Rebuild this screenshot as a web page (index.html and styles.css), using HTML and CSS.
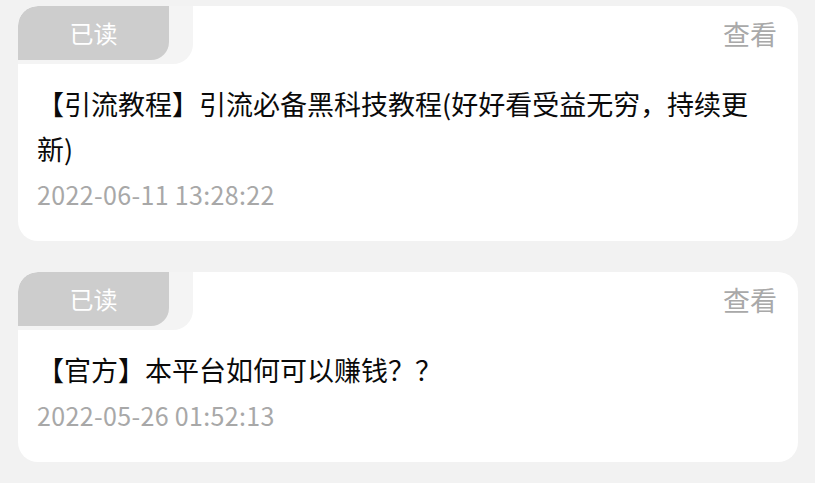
FILE: index.html
```html
<!DOCTYPE html>
<html lang="zh-CN">
<head>
<meta charset="utf-8">
<title>消息</title>
<link rel="stylesheet" href="styles.css">
</head>
<body>
<div class="list">
  <div class="card">
    <div class="card-head">
      <div class="tag-ear"><div class="tag">已读</div></div>
      <div class="view">查看</div>
    </div>
    <div class="title">【引流教程】引流必备黑科技教程(好好看受益无穷，持续更新)</div>
    <div class="date">2022-06-11 13:28:22</div>
  </div>
  <div class="card">
    <div class="card-head">
      <div class="tag-ear"><div class="tag">已读</div></div>
      <div class="view">查看</div>
    </div>
    <div class="title">【官方】本平台如何可以赚钱？？</div>
    <div class="date">2022-05-26 01:52:13</div>
  </div>
</div>
</body>
</html>
```

FILE: styles.css
```css
html, body {
  margin: 0;
  padding: 0;
  background: #f2f2f2;
}
body {
  font-family: "Noto Sans CJK SC", "Noto Sans", sans-serif;
}
.list {
  display: flex;
  flex-direction: column;
  gap: 31px;
  padding: 6px 17px 0 18px;
}
.card {
  background: #fff;
  border-radius: 20px;
  overflow: hidden;
  padding-bottom: 24px;
}
.card-head {
  display: flex;
  justify-content: space-between;
  align-items: flex-start;
}
.tag-ear {
  width: 175px;
  height: 58px;
  background: #f4f4f4;
  border-radius: 0 0 20px 0;
}
.tag {
  width: 151px;
  height: 54px;
  background: #cdcdcd;
  border-radius: 20px 0 18px 0;
  color: #fff;
  font-size: 24px;
  line-height: 54px;
  text-align: center;
}
.view {
  color: #a9a9a9;
  font-size: 27px;
  line-height: 56px;
  padding-right: 21px;
}
.title {
  margin-top: 17px;
  padding: 0 19px;
  color: #0a0a0a;
  font-size: 27px;
  line-height: 45px;
}
.date {
  padding: 0 19px;
  color: #a8a8a8;
  font-size: 25px;
  letter-spacing: 0.35px;
  line-height: 46px;
}
```
